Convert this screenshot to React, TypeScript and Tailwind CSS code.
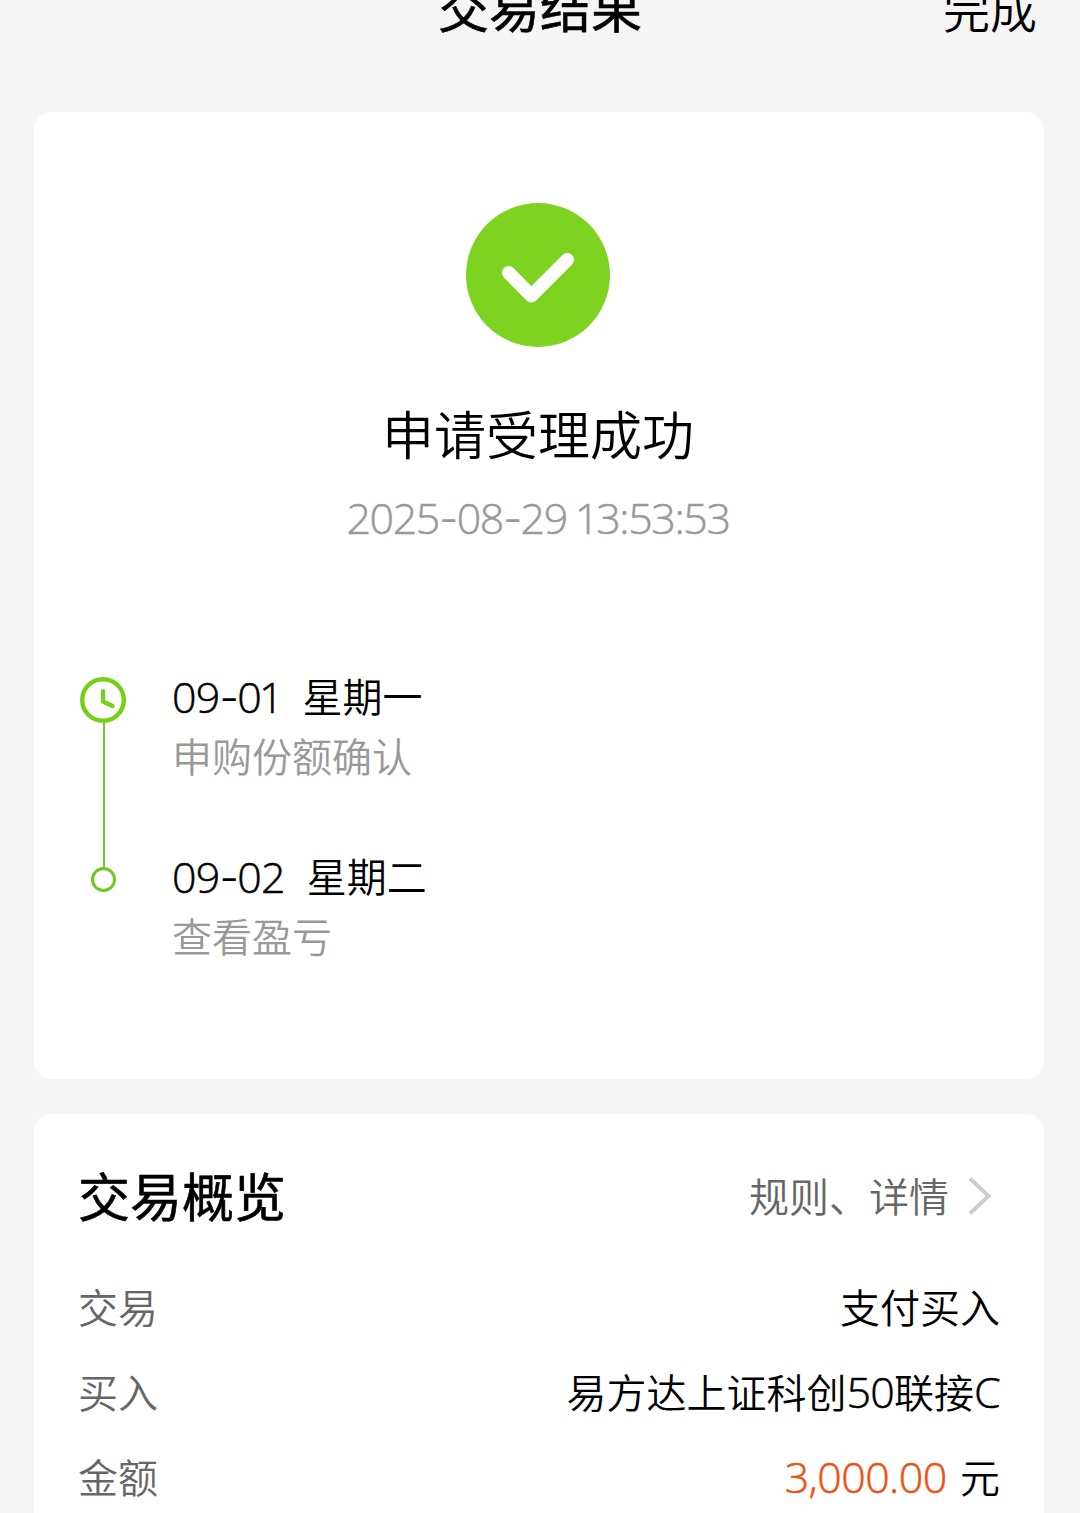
import React from 'react';

interface Step {
  date: string;
  weekday: string;
  label: string;
}

const steps: Step[] = [
  { date: '09-01', weekday: '星期一', label: '申购份额确认' },
  { date: '09-02', weekday: '星期二', label: '查看盈亏' },
];

// Digits run slightly larger than the surrounding text, with wide hyphens and a narrow 1
const Num: React.FC<{ children: string; className?: string }> = ({ children, className = 'tracking-[-0.8px]' }) => (
  <span className={`text-[43px] [-webkit-text-stroke:0.5px] ${className}`}>
    {children.split(/([-1])/).map((part, i) => {
      if (part === '-') return <span key={i} className="font-[Inter] tracking-[-1.8px] [-webkit-text-stroke:0]">-</span>;
      if (part === '1') return <span key={i} className="-ml-[2px] tracking-[-3px]">1</span>;
      return part;
    })}
  </span>
);

const SuccessIcon: React.FC = () => (
  <svg className="w-36 h-36" viewBox="0 0 144 144" fill="none">
    <circle cx="72" cy="72" r="72" fill="#7ed321" />
    <path d="M42.7 69.8 65.3 92.8 101.3 56.8" stroke="#fff" strokeWidth="13.4" strokeLinecap="round" strokeLinejoin="round" />
  </svg>
);

const ClockIcon: React.FC = () => (
  <svg className="w-[46px] h-[46px] shrink-0" viewBox="0 0 46 46" fill="none" stroke="#73d216">
    <circle cx="23" cy="23" r="20.8" strokeWidth="4.4" />
    <path d="M23 14V24.5L32.5 29" strokeWidth="4.2" strokeLinecap="round" strokeLinejoin="round" />
  </svg>
);

const Row: React.FC<{ label: string; children: React.ReactNode }> = ({ label, children }) => (
  <div className="flex h-[85px] items-center justify-between">
    <span className="text-[#666]">{label}</span>
    <span className="whitespace-pre">{children}</span>
  </div>
);

const App: React.FC = () => {
  return (
    <div className="h-[1513px] w-[1080px] overflow-hidden bg-[#f5f5f5] font-['Open_Sans','Noto_Sans_CJK_SC',sans-serif] text-[40px] font-[350] text-black">
      {/* Header */}
      <header className="-mt-7 grid h-[140px] grid-cols-3 items-start px-[43px] leading-[72px]">
        <h1 className="col-start-2 text-center text-[51px] font-normal whitespace-nowrap [-webkit-text-stroke:0.6px]">交易结果</h1>
        <button className="text-right text-[47px] leading-[76px]">完成</button>
      </header>

      <main className="flex flex-col gap-[35px] pl-[34px] pr-9">
        {/* Result */}
        <section className="h-[967px] rounded-[18px] bg-white pt-[91px]">
          <div className="flex flex-col items-center pr-0.5">
            <SuccessIcon />
            <h2 className="mt-[52px] text-[52px] leading-[72px]">申请受理成功</h2>
            <p className="mt-[17px] leading-[60px] text-[#999]">
              <Num className="tracking-[-1.4px]">2025-08-29 13:53:53</Num>
            </p>
          </div>

          <div className="mt-[118px] flex pl-[46px]">
            <div className="flex w-[46px] flex-col items-center pt-2.5">
              <ClockIcon />
              <div className="ml-[2px] h-36 w-[2px] bg-[#6ec82a]" />
              <div className="ml-px size-[25px] rounded-full border-[3px] border-[#6ec81e]" />
            </div>
            <ul className="ml-[46px] flex flex-col gap-[60px] leading-[60px]">
              {steps.map((step) => (
                <li key={step.date}>
                  <div className="flex gap-[22px]">
                    <Num>{step.date}</Num>
                    <span>{step.weekday}</span>
                  </div>
                  <div className="text-[#999]">{step.label}</div>
                </li>
              ))}
            </ul>
          </div>
        </section>

        {/* Overview */}
        <section className="h-[460px] rounded-[18px] bg-white pt-[47px] pr-[44px] pl-[44px]">
          <div className="mb-8 flex items-center justify-between leading-[72px]">
            <h2 className="text-[52px] font-normal [-webkit-text-stroke:0.6px]">交易概览</h2>
            <a className="flex items-center pr-2 text-[#666]">
              规则、详情
              <svg className="ml-[19px] h-10 w-6" viewBox="0 0 24 40" fill="none" stroke="#ccc" strokeWidth="4">
                <path d="M2 1.5 20.5 19 2 36.5" />
              </svg>
            </a>
          </div>
          <Row label="交易">支付买入</Row>
          <Row label="买入">
            易方达上证科创<Num>50</Num>联接<Num>C</Num>
          </Row>
          <Row label="金额">
            <Num className="mr-[3px] tracking-[-0.6px] text-[#f0500f]">3,000.00</Num> 元
          </Row>
        </section>
      </main>
    </div>
  );
};

export default App;
